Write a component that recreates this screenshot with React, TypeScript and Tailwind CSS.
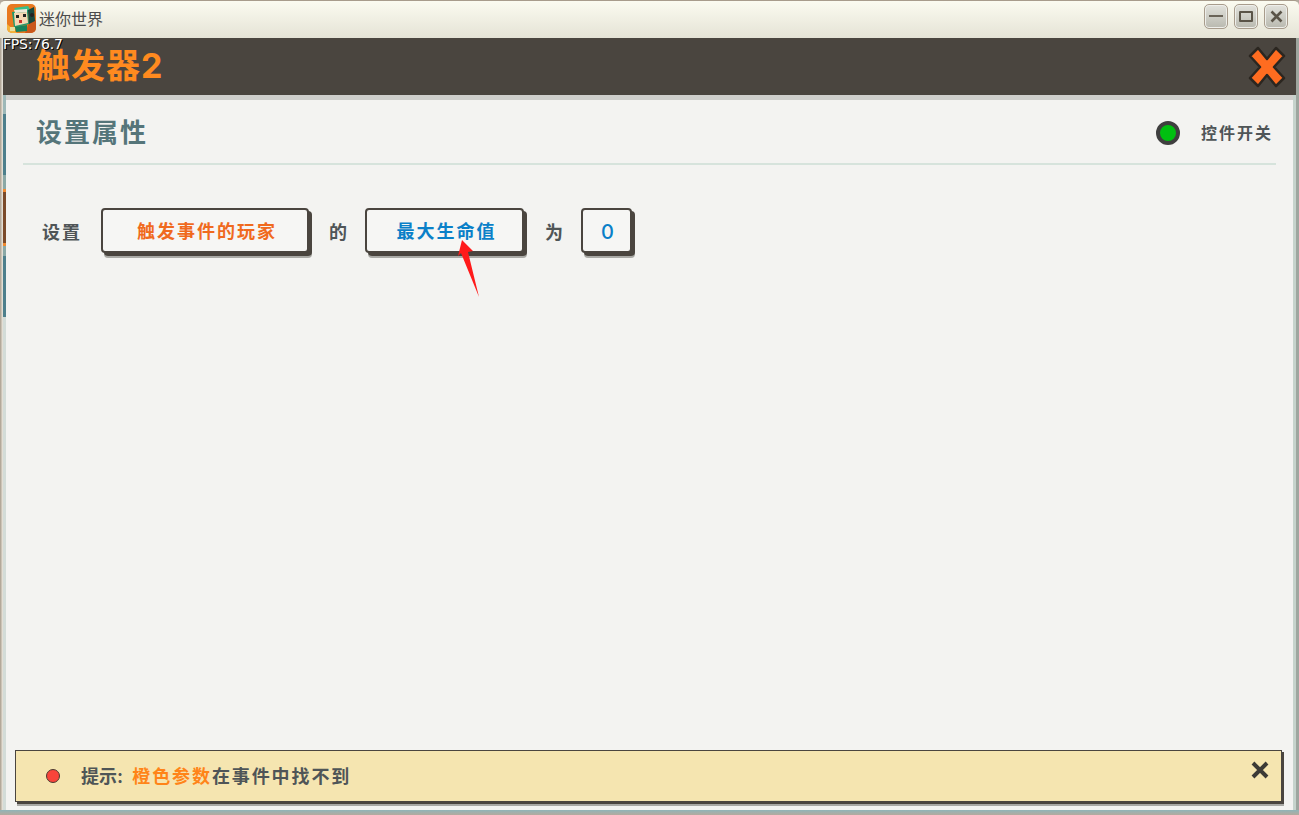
const CJK = "font-['Inter','Noto_Sans_CJK_SC',sans-serif]"

function AppIcon() {
  return (
    <svg width="29" height="29" viewBox="0 0 29 29" className="rounded-[5px] shrink-0">
      <rect width="29" height="29" fill="#e8791f" />
      <path d="M0 20 L10 29 H0Z" fill="#f4b23a" />
      <path d="M22 19 L29 16 V29 H18Z" fill="#c9581c" />
      <polygon points="7,4 21,2 24,7 10,9" fill="#37c08a" />
      <polygon points="5,8 21,6 22,20 7,24" fill="#1f9a6e" />
      <polygon points="21,6 27,3 28,17 22,20" fill="#17493f" />
      <polygon points="7,6 20,5 20,8 8,9" fill="#f0ead8" />
      <polygon points="7,9 20,8 21,19 8,22" fill="#f4d8b4" />
      <rect x="9" y="11" width="3" height="3" fill="#222" />
      <rect x="16" y="10" width="3" height="3" fill="#222" />
      <rect x="12" y="16" width="3" height="3" fill="#c8322a" />
      <polygon points="8,23 20,21 20,27 9,28" fill="#17825c" />
      <rect x="3" y="23" width="5" height="4" fill="#e8e0a0" />
      <circle cx="25" cy="11" r="2" fill="#222" />
    </svg>
  )
}

function WinButton({ children }: { children: React.ReactNode }) {
  return (
    <div className="w-[24px] h-[25px] rounded-[5px] border border-[#a89c8c] bg-gradient-to-b from-[#e2e2dc] to-[#b9b9af] flex items-center justify-center shadow-[inset_0_0_0_1px_#eeeeea]">
      {children}
    </div>
  )
}

function TitleBar() {
  return (
    <div className="h-[38px] shrink-0 flex items-center justify-between pl-[7px] pr-[11px] border-t border-[#a89c8c] rounded-t-[5px] bg-gradient-to-b from-[#fbfbf0] to-[#e5e3d6]">
      <div className="flex items-center gap-[3px] -mt-[2px]">
        <AppIcon />
        <span className="text-[16px] leading-none text-[#4b4b4b]">迷你世界</span>
      </div>
      <div className="flex items-center gap-[6px] -mt-[7px]">
        <WinButton>
          <div className="w-[14px] h-[2px] bg-[#6a6458]" />
        </WinButton>
        <WinButton>
          <div className="w-[14px] h-[11px] border-2 border-[#5a5448] rounded-[1px]" />
        </WinButton>
        <WinButton>
          <svg width="13" height="13" viewBox="0 0 13 13">
            <path d="M1.5 1.5 L11.5 11.5 M11.5 1.5 L1.5 11.5" stroke="#5a5448" strokeWidth="2.6" />
          </svg>
        </WinButton>
      </div>
    </div>
  )
}

function CloseX() {
  return (
    <svg width="38" height="44" viewBox="0 0 38 44">
      <path
        d="M10 3 L19 14 L28 3 L36 11 L26 22 L36 33 L28 41 L19 30 L10 41 L2 33 L12 22 L2 11 Z"
        fill="#ff6c20"
        stroke="#2b2620"
        strokeWidth="2.5"
        strokeLinejoin="round"
      />
    </svg>
  )
}

function Chip({ w, color, children }: { w: string; color: string; children: React.ReactNode }) {
  return (
    <div className={`${w} h-[45px] shrink-0 rounded-[4px] border-2 border-[#4a453f] bg-[#f6f6f4] pt-[2px] pl-[4px] flex items-center justify-center text-[18px] font-bold tracking-[2px] ${color} shadow-[3px_3px_0_#4a453f,3px_5px_0_#a9a9a5]`}>
      {children}
    </div>
  )
}

function Word({ children }: { children: React.ReactNode }) {
  return <span className="pt-[3px] text-[18px] font-bold tracking-[2px] text-[#4f5557] shrink-0">{children}</span>
}

function SideStrip() {
  return (
    <div className="w-[3px] shrink-0 flex flex-col">
      <div className="h-[19px] bg-[#9db8b8]" />
      <div className="h-[61px] bg-[#4d7f8c]" />
      <div className="h-[14px] bg-[#8aa8a6]" />
      <div className="h-[3px] bg-[#f08a30]" />
      <div className="h-[51px] bg-[#7a4a2a]" />
      <div className="h-[3px] bg-[#f08a30]" />
      <div className="h-[10px] bg-[#8aa8a6]" />
      <div className="h-[61px] bg-[#4d7f8c]" />
      <div className="flex-1 bg-[#d3dcd8]" />
    </div>
  )
}

export default function App() {
  return (
    <div className={`relative w-[1299px] h-[815px] overflow-hidden flex flex-col bg-[#b3aa9e] ${CJK}`}>
      <TitleBar />

      <div className="flex-1 flex min-h-0">
        <div className="w-[3px] shrink-0 bg-gradient-to-r from-[#a89c8c] to-[#efece4]" />

        <div className="flex-1 flex flex-col min-w-0">
          <header className="h-[57px] shrink-0 bg-[#4a453f] flex items-center justify-between pl-[33px] pr-[10px]">
            <h1 className="-mt-[1px] text-[34px] leading-none font-bold text-[#ff8a1f] tracking-[1px]">触发器2</h1>
            <CloseX />
          </header>

          <div className="flex-1 flex min-h-0 bg-[#f3f3f1]">
            <SideStrip />
            <main className="relative flex-1 flex flex-col min-w-0">
              <div className="h-[5px] shrink-0 bg-[#cfcfcc]" />

              <div className="h-[65px] shrink-0 mx-[17px] pt-[2px] flex items-center justify-between border-b-2 border-[#d6e3dc] pl-[13px] pr-[3px]">
                <h2 className="text-[26px] font-bold leading-none tracking-[2px] text-[#55757a]">设置属性</h2>
                <div className="flex items-center gap-[21px]">
                  <div className="w-[24px] h-[24px] rounded-full border-[4px] border-[#3f3f3f] bg-[#00c010]" />
                  <span className="text-[16px] font-bold tracking-[2px] text-[#4f5557]">控件开关</span>
                </div>
              </div>

              <div className="flex items-center mt-[43px] pl-[36px]">
                <Word>设置</Word>
                <div className="w-[19px]" />
                <Chip w="w-[208px]" color="text-[#f06a1e]">触发事件的玩家</Chip>
                <div className="w-[20px]" />
                <Word>的</Word>
                <div className="w-[16px]" />
                <Chip w="w-[159px]" color="text-[#0a80c8]">最大生命值</Chip>
                <div className="w-[21px]" />
                <Word>为</Word>
                <div className="w-[16px]" />
                <Chip w="w-[51px]" color="text-[#0a80c8]">
                  <span className="text-[20px] font-medium">0</span>
                </Chip>
              </div>

              <div className="mt-auto mb-[8px] ml-[9px] mr-[11px] h-[52px] shrink-0 border border-[#4a453f] bg-[#f5e5b0] flex items-start justify-between pl-[30px] pr-[11px] shadow-[2px_2px_0_#4a453f,2px_4px_0_#a9a9a5]">
                <div className="h-full flex items-center gap-[21px]">
                  <div className="w-[14px] h-[14px] rounded-full border border-[#4a3a30] bg-[#f8453a]" />
                  <div className="pt-[1px] text-[18px] font-bold tracking-[1.9px] text-[#4f5557] whitespace-nowrap">
                    <span className="tracking-[0px] mr-[5px]">提示: </span>
                    <span className="text-[#ff8418]">橙色参数</span>在事件中找不到
                  </div>
                </div>
                <svg width="20" height="20" viewBox="0 0 20 20" className="mt-[9px]">
                  <path d="M3 3 L17 17 M17 3 L3 17" stroke="#3c3a36" strokeWidth="4" />
                </svg>
              </div>
            </main>

            <div className="w-[3px] shrink-0 bg-[#c6d3cc]" />
          </div>
        </div>

        <div className="w-[3px] shrink-0 bg-[#9ea69f]" />
      </div>

      <div className="h-[5px] shrink-0 bg-gradient-to-b from-[#8fb4b8] to-[#b3aa9e]" />

      <div className="absolute left-[3px] top-[37px] text-[14px] leading-[15px] tracking-[-0.2px] text-white [text-shadow:1px_1px_0_#000] font-['DejaVu_Sans',sans-serif]">
        FPS:76.7
      </div>

      <svg width="30" height="62" viewBox="0 0 30 62" className="absolute left-[455px] top-[238px]">
        <polygon points="7,2 18,13 13,14 24,59 6,15 3,18" fill="#ff1a1a" />
      </svg>
    </div>
  )
}
